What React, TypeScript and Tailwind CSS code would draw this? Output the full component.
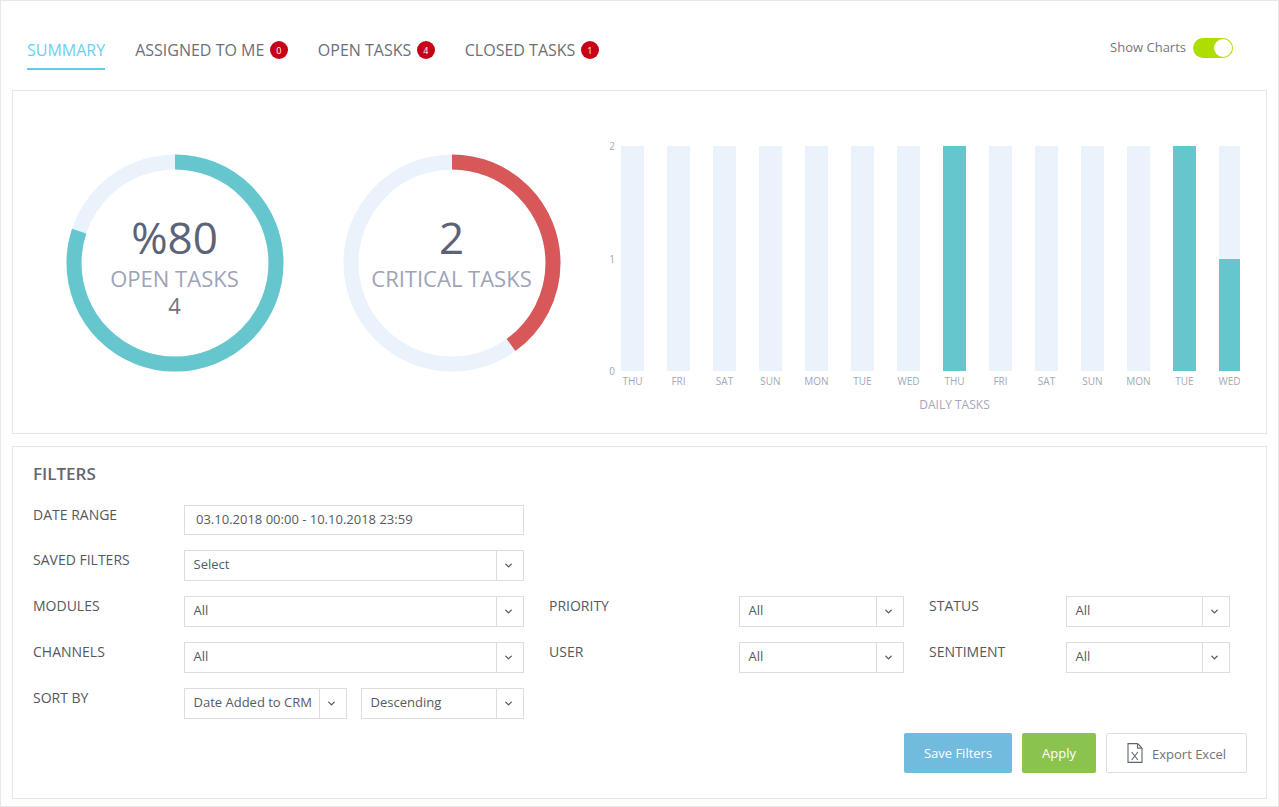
import { ChevronDown } from "lucide-react";

const font = "font-['Open_Sans',sans-serif]";

function Tab({ label, count, active }: { label: string; count?: number; active?: boolean }) {
  return (
    <div className={`flex h-[39px] items-start border-b-2 pt-[8px] ${active ? "border-[#5ccdf1]" : "border-transparent"}`}>
      <span className={`text-[16px] leading-[22px] ${active ? "text-[#6dcff0]" : "text-[#6b6f78]"}`}>{label}</span>
      {count !== undefined && (
        <span className="ml-[5.5px] mt-[2px] flex h-[18px] w-[18px] items-center justify-center rounded-full bg-[#c80017] text-[9px] leading-none text-white">
          {count}
        </span>
      )}
    </div>
  );
}

function Donut({ pct, color, children }: { pct: number; color: string; children: React.ReactNode }) {
  const r = 101;
  const c = 2 * Math.PI * r;
  return (
    <div className="relative h-[218px] w-[218px] shrink-0">
      <svg width="218" height="218" viewBox="0 0 218 218" className="block">
        <circle cx="109" cy="109" r={r} fill="none" stroke="#eaf2fc" strokeWidth="15" />
        <circle
          cx="109"
          cy="109"
          r={r}
          fill="none"
          stroke={color}
          strokeWidth="15"
          strokeDasharray={`${c * pct} ${c}`}
          transform="rotate(-90 109 109)"
        />
      </svg>
      <div className="absolute inset-0 flex flex-col items-center pr-[1px] pt-[58px]">{children}</div>
    </div>
  );
}

const days = ["THU", "FRI", "SAT", "SUN", "MON", "TUE", "WED", "THU", "FRI", "SAT", "SUN", "MON", "TUE", "WED"];

function Bar({ day, index }: { day: string; index: number }) {
  const full = index === 7 || index === 12;
  const half = index === 13;
  return (
    <div className={`flex flex-col items-center ${half ? "w-[21px]" : "w-[23px]"}`}>
      <div className="flex h-[225px] w-full flex-col justify-end bg-[#eaf2fc]">
        {full && <div className="h-full w-full bg-[#65c6cd]" />}
        {half && <div className="h-1/2 w-full bg-[#65c6cd]" />}
      </div>
      <span className="mt-[4px] whitespace-nowrap text-[10px] leading-[12px] text-[#a3a7b8]">{day}</span>
    </div>
  );
}

function Select({ value, width }: { value: string; width: string }) {
  return (
    <div className={`flex h-[31px] items-stretch border border-[#dddddd] bg-white ${width}`}>
      <div className="flex min-w-0 flex-1 items-center pb-[2px] pl-[8.5px] text-[13px] text-[#555a63]">{value}</div>
      <div className="flex w-[27px] items-center justify-center border-l border-[#dddddd] pr-[4px]">
        <ChevronDown size={11} strokeWidth={3} className="text-[#555a63]" />
      </div>
    </div>
  );
}

function Label({ text, width }: { text: string; width: string }) {
  return <div className={`shrink-0 pt-[1px] text-[14px] leading-[18px] text-[#54585f] ${width}`}>{text}</div>;
}

export default function App() {
  return (
    <div className={`${font} flex h-[807px] w-[1279px] flex-col overflow-hidden border border-[#e6e8ec] bg-white`}>
      <div className="flex h-[89px] shrink-0 items-start justify-between pl-[26px] pr-[45px] pt-[30px]">
        <div className="flex gap-[30px]">
          <Tab label="SUMMARY" active />
          <Tab label="ASSIGNED TO ME" count={0} />
          <Tab label="OPEN TASKS" count={4} />
          <Tab label="CLOSED TASKS" count={1} />
        </div>
        <div className="flex items-center gap-[7px] pt-[7px]">
          <span className="-mt-[2px] text-[13px] leading-[20px] text-[#73777f]">Show Charts</span>
          <div className="flex h-[20px] w-[40px] items-center justify-end rounded-full bg-[#aedd00] pr-[1px]">
            <div className="h-[18px] w-[18px] rounded-full bg-white" />
          </div>
        </div>
      </div>

      <div className="mx-[11px] flex h-[344px] shrink-0 border border-[#e3e6ec] bg-white pl-[53px] pt-[63px]">
        <Donut pct={0.8} color="#65c6cd">
          <div className="text-[44px] leading-[50px] text-[#5a6378]">%80</div>
          <div className="mt-[1px] text-[22px] leading-[30px] text-[#9ea3b8]">OPEN TASKS</div>
          <div className="text-[22px] leading-[24px] text-[#6e7383]">4</div>
        </Donut>
        <div className="ml-[59px]">
          <Donut pct={0.4} color="#d8585a">
            <div className="text-[44px] leading-[50px] text-[#5a6378]">2</div>
            <div className="mt-[1px] text-[22px] leading-[30px] text-[#9ea3b8]">CRITICAL TASKS</div>
          </Donut>
        </div>
        <div className="-mt-[8px] flex flex-col">
          <div className="flex">
            <div className="flex h-[225px] w-[60px] flex-col items-end justify-between pr-[6px] text-[10px] leading-none text-[#a3a7b8]">
              <span className="-mt-[5px]">2</span>
              <span>1</span>
              <span className="-mb-[5px]">0</span>
            </div>
            <div className="flex gap-[23px]">
              {days.map((d, i) => (
                <Bar key={i} day={d} index={i} />
              ))}
            </div>
          </div>
          <div className="mt-[10px] pl-[108px] text-center text-[12px] leading-[16px] text-[#a3a7b8]">DAILY TASKS</div>
        </div>
      </div>

      <div className="mx-[11px] mt-[12px] flex h-[353px] shrink-0 flex-col border border-[#e3e6ec] bg-white pl-[20px] pr-[19px]">
        <div className="mt-[16px] text-[17px] font-semibold leading-[22px] text-[#62666d]">FILTERS</div>

        <div className="mt-[20px] flex">
          <Label text="DATE RANGE" width="w-[151px]" />
          <div className="flex h-[30px] w-[340px] items-center border border-[#dddddd] pl-[11px] text-[13px] text-[#555a63]">
            03.10.2018 00:00 - 10.10.2018 23:59
          </div>
        </div>

        <div className="mt-[15px] flex">
          <Label text="SAVED FILTERS" width="w-[151px]" />
          <Select value="Select" width="w-[340px]" />
        </div>

        <div className="mt-[15px] flex">
          <Label text="MODULES" width="w-[151px]" />
          <Select value="All" width="w-[340px]" />
          <div className="w-[25px]" />
          <Label text="PRIORITY" width="w-[190px]" />
          <Select value="All" width="w-[165px]" />
          <div className="w-[25px]" />
          <Label text="STATUS" width="w-[137px]" />
          <Select value="All" width="w-[164px]" />
        </div>

        <div className="mt-[15px] flex">
          <Label text="CHANNELS" width="w-[151px]" />
          <Select value="All" width="w-[340px]" />
          <div className="w-[25px]" />
          <Label text="USER" width="w-[190px]" />
          <Select value="All" width="w-[165px]" />
          <div className="w-[25px]" />
          <Label text="SENTIMENT" width="w-[137px]" />
          <Select value="All" width="w-[164px]" />
        </div>

        <div className="mt-[15px] flex">
          <Label text="SORT BY" width="w-[151px]" />
          <Select value="Date Added to CRM" width="w-[163px]" />
          <div className="w-[14px]" />
          <Select value="Descending" width="w-[163px]" />
        </div>

        <div className="mt-[14px] flex justify-end gap-[10px]">
          <button className="h-[40px] w-[108px] rounded-[2px] bg-[#70bbde] pt-[1px] text-[13px] text-white">Save Filters</button>
          <button className="h-[40px] w-[74px] rounded-[2px] bg-[#8bc34f] pt-[1px] text-[13px] text-white">Apply</button>
          <button className="flex h-[40px] w-[141px] items-center justify-center gap-[9px] rounded-[2px] border border-[#dddddd] bg-white text-[13px] text-[#6f737b]">
            <svg width="16" height="20" viewBox="0 0 16 20" fill="none" stroke="#5f6672" strokeWidth="1.1">
              <path d="M1 .6h9.5L15 5.1v14.3H1z" />
              <path d="M10.5.6v4.5H15" />
              <path d="M4.7 9l6.2 8M10.9 9l-6.2 8" />
            </svg>
            <span className="mt-[4px]">Export Excel</span>
          </button>
        </div>
      </div>
    </div>
  );
}
